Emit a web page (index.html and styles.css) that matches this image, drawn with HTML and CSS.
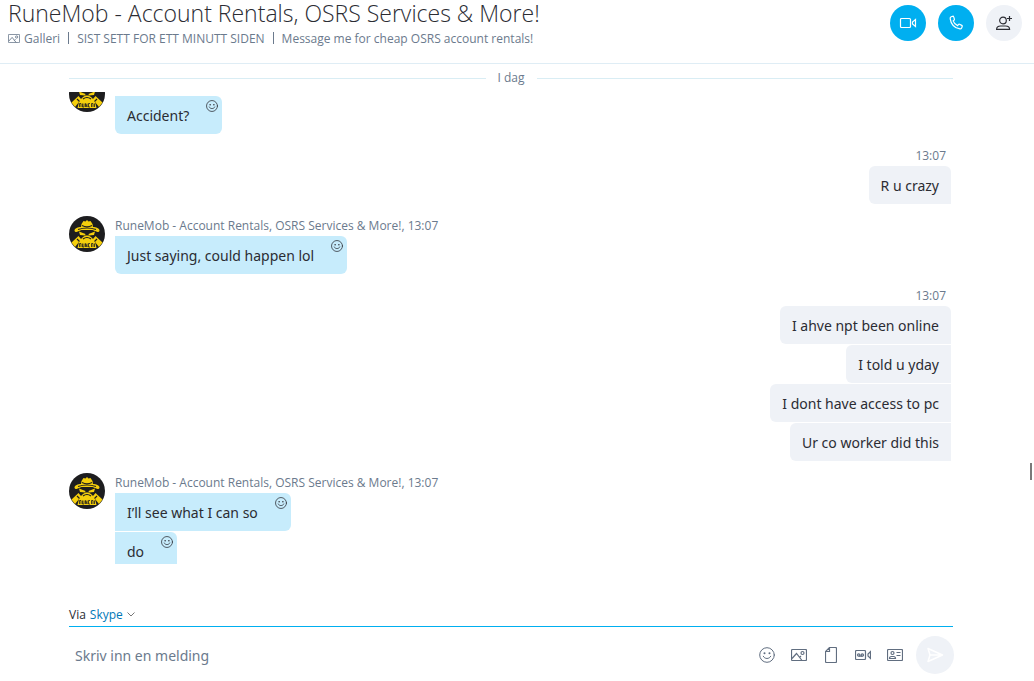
FILE: index.html
```html
<!DOCTYPE html>
<html lang="nb">
<head>
<meta charset="utf-8">
<title>RuneMob</title>
<meta name="viewport" content="width=device-width, initial-scale=1">
<link rel="stylesheet" href="styles.css">
</head>
<body>
<svg class="sprites" aria-hidden="true">
  <symbol id="smile" viewBox="0 0 16 16">
    <g fill="none" stroke="currentColor" stroke-linecap="round"><circle cx="8" cy="8" r="7.3"/><path d="M4.3 9.3c1.2 3 6.2 3 7.4 0"/></g>
    <g fill="currentColor"><circle cx="5.5" cy="6.3" r="1"/><circle cx="10.5" cy="6.3" r="1"/></g>
  </symbol>
  <symbol id="picture" viewBox="0 0 16 12">
    <g fill="none" stroke="currentColor" stroke-width="1.2"><rect x=".5" y=".5" width="15" height="11" rx="1"/><path d="M1 9.5l4.5-5 5.5 7M8.500 8.500l1.500-1.500"/><circle cx="11.500" cy="4" r="1.500"/></g>
  </symbol>
  <symbol id="avatar" viewBox="0 0 36 36">
    <circle cx="18" cy="18" r="18" fill="#1d1d1f"/>
    <g fill="#f5cf0c">
      <path d="M12.500 8l2-3 2 .5L18 4l1.500 1.500 2-.5 2 3 .5 3c3 0 6.500 1.500 6.500 3.500 0 1-1 1.500-2 1.500l-5-2h-11l-5 2c-1 0-2-.5-2-1.500C5.500 12.500 9 11 12 11z"/>
      <path d="M10 15.500l6.500 2.500-.5 1.500-5-.5zM26 15.500l-6.500 2.500.5 1.500 5-.5z"/>
      <path d="M14 21l2.500-1.500h3L22 21l2 2 2.500-3 7 6.500-3.500 4.500-4-5H10l-4 5-3.500-4.500 7-6.500L12 23z"/>
      <path d="M10 26h16l1.500 6h-19z"/>
    </g>
    <path d="M13 9.500q5 2.500 10 0M9 13.500q9-3 18 0M14 23q4-3 8 0M8 23l2.500 2.500M28 23l-2.500 2.500" fill="none" stroke="#1d1d1f" stroke-width="1.200"/>
    <path d="M10.500 31v-3.500H12V31M13.500 27.500V31H15v-3.500M16.500 31v-3.500l1.500 3.500v-3.500M21 27.500h-1.500V31H21M22.500 31v-3.500H24V31M25.500 27.500V31" fill="none" stroke="#1d1d1f" stroke-width=".8"/>
  </symbol>
</svg>
<div class="app">
  <header class="header">
    <div class="contact">
      <h1 class="title">RuneMob - Account Rentals, OSRS Services &amp; More!</h1>
      <div class="status">
        <button class="gallery" type="button"><svg class="gallery-icon"><use href="#picture"/></svg>Galleri</button>
        <span class="bar"></span><span>SIST SETT FOR ETT MINUTT SIDEN</span>
        <span class="bar"></span><span>Message me for cheap OSRS account rentals!</span>
      </div>
    </div>
    <div class="calls">
      <button class="round call" type="button" aria-label="Videosamtale"><svg width="18" height="14" viewBox="0 0 18 14" fill="none" stroke="currentColor" stroke-width="1.2"><rect x="1.500" y="2.500" width="10" height="9" rx="1"/><path d="M16.500 3.500v7l-3-2.500v-2z"/></svg></button>
      <button class="round call" type="button" aria-label="Ring"><svg width="16" height="16" viewBox="0 0 16 16" fill="none" stroke="currentColor" stroke-width="1.2" stroke-linejoin="round"><path d="M3.200 1.800l1.600-.6c.5 0 .8.300.9.700l.7 2.200c.1.500 0 .8-.4 1.100l-.9.700c.7 1.900 2.500 3.800 4.500 4.700l.8-1c.3-.4.7-.5 1.100-.3l2.300 1.100c.4.200.6.600.4 1.100l-.6 1.500c-.3.700-.9 1-1.700.9C6.800 13 3 9.200 2.200 3.800c-.2-.9.200-1.600 1-2z"/></svg></button>
      <button class="round" type="button" aria-label="Legg til personer"><svg width="18" height="18" viewBox="0 0 18 18" fill="none" stroke="currentColor" stroke-width="1.200"><circle cx="8" cy="6.500" r="3.300"/><path d="M1.600 15.400c0-2.300 2-3.400 4-3.400h5c2 0 4 1.100 4 3.400zM14.500 2v5M12 4.500h5"/></svg></button>
    </div>
  </header>
  <main class="chat">
    <div class="day"><span class="day-name">I dag</span></div>
    <div class="scroller">
      <section class="group continued">
        <svg class="avatar"><use href="#avatar"/></svg>
        <div class="messages"><p class="bubble">Accident?<button class="react" type="button" aria-label="Reager"><svg><use href="#smile"/></svg></button></p></div>
      </section>
      <section class="group own"><div class="messages"><div class="meta">13:07</div><p class="bubble">R u crazy</p></div></section>
      <section class="group">
        <svg class="avatar"><use href="#avatar"/></svg>
        <div class="messages"><div class="meta">RuneMob - Account Rentals, OSRS Services &amp; More!, 13:07</div><p class="bubble">Just saying, could happen lol<button class="react" type="button" aria-label="Reager"><svg><use href="#smile"/></svg></button></p></div>
      </section>
      <section class="group own"><div class="messages"><div class="meta">13:07</div><p class="bubble">I ahve npt been online</p><p class="bubble">I told u yday</p><p class="bubble">I dont have access to pc</p><p class="bubble">Ur co worker did this</p></div></section>
      <section class="group">
        <svg class="avatar"><use href="#avatar"/></svg>
        <div class="messages"><div class="meta">RuneMob - Account Rentals, OSRS Services &amp; More!, 13:07</div><p class="bubble">I’ll see what I can so<button class="react" type="button" aria-label="Reager"><svg><use href="#smile"/></svg></button></p><p class="bubble">do<button class="react" type="button" aria-label="Reager"><svg><use href="#smile"/></svg></button></p></div>
      </section>
    </div>
  </main>
  <footer class="composer">
    <div class="via">Via <button class="via-choice" type="button">Skype<svg width="8" height="5" viewBox="0 0 8 5" fill="none" stroke="#777"><path d="M.5.5L4 4 7.500.5"/></svg></button></div>
    <div class="entry">
      <input class="field" type="text" placeholder="Skriv inn en melding" aria-label="Skriv inn en melding">
      <div class="tools">
        <button class="tool" type="button" aria-label="Uttrykksikon"><svg width="16" height="16"><use href="#smile"/></svg></button>
        <button class="tool" type="button" aria-label="Bilde"><svg width="16" height="12"><use href="#picture"/></svg></button>
        <button class="tool" type="button" aria-label="Fil"><svg width="12" height="16" viewBox="0 0 12 16" fill="none" stroke="currentColor" stroke-width="1.2"><path d="M4.500.5h6a1 1 0 0 1 1 1v13a1 1 0 0 1-1 1h-9a1 1 0 0 1-1-1v-10zM4.500.5v4h-4"/></svg></button>
        <button class="tool" type="button" aria-label="Videomelding"><svg width="16" height="10" viewBox="0 0 16 10" fill="none" stroke="currentColor" stroke-width="1.2"><rect x=".5" y=".5" width="10" height="9" rx="1"/><circle cx="3.700" cy="5" r="1.200"/><circle cx="7.300" cy="5" r="1.200"/><path d="M3.700 6.200h3.600M15.500 1.500v7l-2.500-2.500v-2z"/></svg></button>
        <button class="tool" type="button" aria-label="Kontakt"><svg width="16" height="12" viewBox="0 0 16 12" fill="none" stroke="currentColor" stroke-width="1.2"><rect x=".5" y=".5" width="15" height="11" rx="1"/><circle cx="5.500" cy="4" r="1.500"/><path d="M2.500 9.500c0-1.500 1-2 2-2h2c1 0 2 .5 2 2zM9.500 3.500h4M9.500 6.500h4"/></svg></button>
      </div>
      <button class="round send" type="button" aria-label="Send"><svg width="18" height="16" viewBox="0 0 18 16" fill="none" stroke="#fff" stroke-width="1.500" stroke-linejoin="round"><path d="M2 1.500L16.500 8 2 14.500 4 8zM4 8h12"/></svg></button>
    </div>
  </footer>
  <div class="thumb"></div>
</div>
</body>
</html>
```
FILE: styles.css
```css
* { box-sizing: border-box; }
body { margin: 0; background: #fff; color: #2b2c33; font-family: "Open Sans", "Noto Sans", sans-serif; font-size: 14px; }
h1, p { margin: 0; }
button { padding: 0; border: 0; background: none; color: inherit; font: inherit; }
svg { display: block; flex: none; }
.sprites { position: absolute; width: 0; height: 0; }
.app { position: relative; display: flex; flex-direction: column; height: 100vh; }

.header { display: flex; justify-content: space-between; height: 64px; padding: 0 12px 0 8px; border-bottom: 1px solid #dfedf5; }
.title { font-size: 23px; font-weight: 300; line-height: 26px; white-space: nowrap; }
.status { display: flex; align-items: center; gap: 8px; height: 24px; color: #6b7a8d; font-size: 12px; white-space: nowrap; }
.gallery { display: flex; align-items: center; gap: 4px; }
.gallery-icon { width: 12px; height: 9px; }
.bar { width: 1px; height: 12px; background: #6b7a8d; }
.calls { display: flex; gap: 12px; padding-top: 5px; }
.round { display: grid; place-items: center; width: 36px; height: 36px; border-radius: 50%; background: #eff2f7; }
.call { background: #00aff0; color: #fff; }

.chat { flex: 1; display: flex; flex-direction: column; min-height: 0; padding: 0 81px 0 69px; }
.day { display: flex; align-items: center; gap: 12px; height: 28px; color: #6b7a8d; font-size: 12px; }
.day-name { padding-bottom: 2px; }
.day::before, .day::after { content: ""; flex: 1; height: 1px; background: #d9edf4; }
.scroller { flex: 1; min-height: 0; overflow: hidden; }
.group { display: flex; gap: 10px; margin-bottom: 12px; }
.continued { margin-top: -16px; }
.continued .messages { padding-top: 20px; }
.own { justify-content: flex-end; padding-right: 2px; }
.avatar { width: 36px; height: 36px; }
.messages { display: flex; flex-direction: column; align-items: flex-start; gap: 1px; }
.meta { height: 19px; color: #6b7a8d; font-size: 12px; line-height: 19px; }
.bubble { position: relative; padding: 10px 33px 8px 12px; border-radius: 0 6px 6px 0; background: #c7ecfc; font-family: "Noto Sans", "Open Sans", sans-serif; line-height: 20px; }
.bubble:last-child { border-bottom-left-radius: 6px; }
.react { position: absolute; top: 4px; right: 4px; }
.react svg { width: 12px; height: 12px; }
.own .messages { align-items: flex-end; }
.own .meta { padding-right: 5px; }
.own .bubble { padding-right: 12px; border-radius: 6px 0 0 6px; background: #eff2f7; }
.own .meta + .bubble { border-top-right-radius: 6px; }

.composer { height: 117px; padding: 40px 80px 0 69px; }
.via { display: flex; align-items: center; gap: 4px; height: 23px; margin-right: 1px; padding-bottom: 1px; border-bottom: 1px solid #00aff0; font-size: 12px; }
.via-choice { display: flex; align-items: center; gap: 4px; color: #0078b8; }
.entry { display: flex; align-items: center; height: 56px; }
.field { flex: 1; min-width: 0; padding: 0 6px; border: 0; outline: 0; background: none; color: inherit; font-family: "Noto Sans", "Open Sans", sans-serif; font-size: 14px; }
.field::placeholder { color: #6b7a8d; opacity: 1; }
.tools { display: flex; color: #616e80; }
.tool { display: grid; place-items: center; width: 32px; height: 32px; }
.send { width: 38px; height: 38px; margin-left: 5px; }
.thumb { position: absolute; top: 463px; right: 2px; width: 2px; height: 17px; background: #7a7a7a; }
```
